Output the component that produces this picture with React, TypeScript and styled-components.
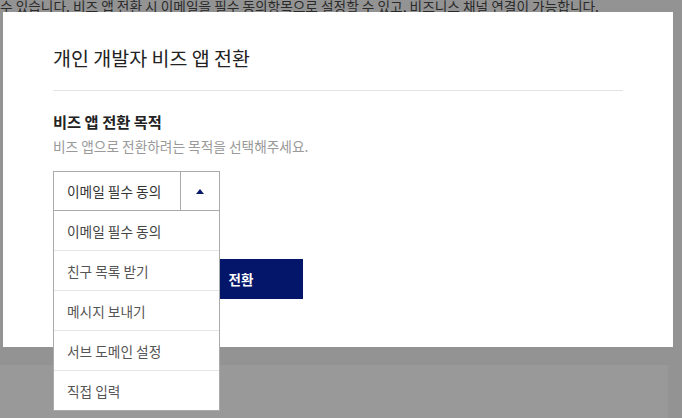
import React from "react";
import styled, { createGlobalStyle } from "styled-components";

const GlobalStyle = createGlobalStyle`
  html, body {
    margin: 0;
    padding: 0;
    background: #939393;
    font-family: "Noto Sans CJK KR", "Noto Sans", sans-serif;
  }
  * { box-sizing: border-box; }
`;

const Page = styled.div`
  width: 682px;
  height: 418px;
  overflow: hidden;
  display: flex;
  flex-direction: column;
`;

const BackdropText = styled.p`
  margin: -4px 0 0;
  font-size: 13.7px;
  line-height: 20px;
  color: #2a2a2a;
  white-space: nowrap;
`;

const Spacer = styled.div`
  flex: 1;
`;

const BackdropCard = styled.div`
  width: 668px;
  height: 53px;
  background: #999999;
`;

const Modal = styled.div`
  position: fixed;
  left: 3px;
  top: 12px;
  width: 670px;
  height: 335px;
  background: #ffffff;
  padding: 0 50px;
  z-index: 10;
`;

const Header = styled.div`
  padding: 32px 0 19px;
  border-bottom: 1px solid #e4e4e4;
`;

const Title = styled.h2`
  margin: 0;
  font-size: 19.5px;
  line-height: 27px;
  font-weight: 400;
  color: #222222;
`;

const Body = styled.div`
  padding-top: 19px;
`;

const Label = styled.h3`
  margin: 0;
  font-size: 15.3px;
  line-height: 22px;
  font-weight: 700;
  color: #222222;
`;

const Desc = styled.p`
  margin: 4px 0 0;
  font-size: 13.7px;
  line-height: 20px;
  color: #999999;
`;

const SelectWrap = styled.div`
  position: relative;
  width: 167px;
  margin-top: 15px;
`;

const SelectBox = styled.div`
  height: 40px;
  border: 1px solid #aaaaaa;
  display: flex;
  background: #fff;
`;

const SelectValue = styled.div`
  flex: 1;
  display: flex;
  align-items: center;
  padding-left: 13px;
  font-size: 13.7px;
  color: #333333;
`;

const ArrowCell = styled.div`
  width: 39px;
  border-left: 1px solid #aaaaaa;
  display: flex;
  align-items: center;
  justify-content: center;
`;

const OptionList = styled.ul`
  position: absolute;
  top: 100%;
  left: 0;
  width: 100%;
  margin: 0;
  padding: 0;
  list-style: none;
  background: #ffffff;
  border-left: 1px solid #aaaaaa;
  border-right: 1px solid #aaaaaa;
  z-index: 2;
`;

const OptionItem = styled.li<{ $selected?: boolean }>`
  height: 40px;
  display: flex;
  align-items: center;
  padding-left: 13px;
  font-size: 13.7px;
  color: ${(p) => (p.$selected ? "#444444" : "#555555")};
  border-bottom: 1px solid #e5e5e5;
  &:last-child {
    border-bottom-color: #aaaaaa;
  }
`;

const ButtonRow = styled.div`
  display: flex;
  margin-top: 48px;
  padding-left: 126px;
`;

const PrimaryButton = styled.button`
  width: 124px;
  height: 40px;
  border: none;
  background: #03166a;
  color: #ffffff;
  font-family: inherit;
  font-size: 13.5px;
  font-weight: 700;
  cursor: pointer;
`;

const options = ["이메일 필수 동의", "친구 목록 받기", "메시지 보내기", "서브 도메인 설정", "직접 입력"];

export default function App() {
  return (
    <>
      <GlobalStyle />
      <Page>
        <BackdropText>
          수 있습니다. 비즈 앱 전환 시 이메일을 필수 동의항목으로 설정할 수 있고, 비즈니스 채널 연결이 가능합니다.
        </BackdropText>
        <Spacer />
        <BackdropCard />
      </Page>
      <Modal>
        <Header>
          <Title>개인 개발자 비즈 앱 전환</Title>
        </Header>
        <Body>
          <Label>비즈 앱 전환 목적</Label>
          <Desc>비즈 앱으로 전환하려는 목적을 선택해주세요.</Desc>
          <SelectWrap>
            <SelectBox>
              <SelectValue>이메일 필수 동의</SelectValue>
              <ArrowCell>
                <svg width="8" height="5" viewBox="0 0 8 5">
                  <path d="M4 0 L8 5 L0 5 Z" fill="#0a1a6b" />
                </svg>
              </ArrowCell>
            </SelectBox>
            <OptionList>
              {options.map((o, i) => (
                <OptionItem key={o} $selected={i === 0}>
                  {o}
                </OptionItem>
              ))}
            </OptionList>
          </SelectWrap>
          <ButtonRow>
            <PrimaryButton>전환</PrimaryButton>
          </ButtonRow>
        </Body>
      </Modal>
    </>
  );
}
